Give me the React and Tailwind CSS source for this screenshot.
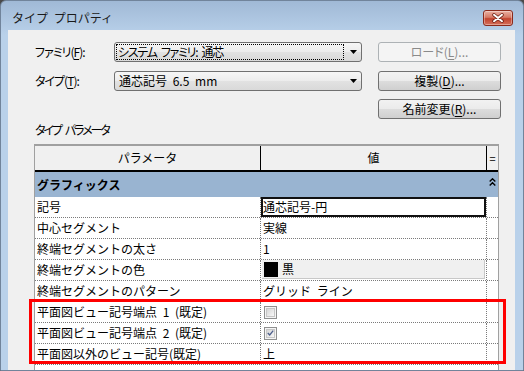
function Mn({ children }) {
  return <span className="underline underline-offset-[2px]">{children}</span>;
}

function Arrow() {
  return (
    <svg width="7" height="4" viewBox="0 0 7 4">
      <path d="M0 0h7L3.5 4z" fill="#000" />
    </svg>
  );
}

function Dropdown({ children, focus }) {
  return (
    <div className="w-[248px] h-[20px] rounded-[3px] border border-[#707070] bg-[linear-gradient(#f6f6f6,#ececec_50%,#e2e2e2_50%,#d9d9d9)] flex items-center pl-[1px]">
      <div
        className={`w-[228px] h-[16px] flex items-center pl-[1px] ${
          focus ? "border border-dotted border-black" : "border border-transparent"
        }`}
      >
        {children}
      </div>
      <div className="flex-1 flex justify-center pl-[1px]">
        <Arrow />
      </div>
    </div>
  );
}

function Button({ children, disabled, className = "" }) {
  return (
    <div
      className={`w-[123px] h-[20px] rounded-[3px] border flex items-center justify-center leading-none ${
        disabled
          ? "border-[#adb2b5] bg-[#f4f4f4] text-[#8a8a8a]"
          : "border-[#707070] bg-[linear-gradient(#f2f2f2,#ebebeb_50%,#dddddd_50%,#cfcfcf)] text-black"
      } ${className}`}
    >
      {children}
    </div>
  );
}

function CloseButton() {
  return (
    <div className="w-[30px] h-[16px] rounded-[3px] border border-[#8a2a1c] bg-[linear-gradient(#eab0a3,#d67a66_45%,#c2432f_55%,#d5705a)] shadow-[inset_0_0_0_1px_rgba(255,255,255,0.35)] flex items-center justify-center">
      <svg width="12" height="10" viewBox="0 0 12 10">
        <path d="M2 1.8L10 8.2M10 1.8L2 8.2" stroke="#6b1f14" strokeWidth="3.4" strokeLinecap="round" />
        <path d="M2 1.8L10 8.2M10 1.8L2 8.2" stroke="#fff" strokeWidth="2" strokeLinecap="round" />
      </svg>
    </div>
  );
}

function Checkbox({ checked }) {
  return (
    <div className="w-[13px] h-[13px] border border-[#8e8f8f] bg-[#f4f4f4] p-[1px]">
      <div className="w-full h-full border border-[#c6c6c6] bg-[linear-gradient(135deg,#d6d6d6,#f7f7f7)] flex items-center justify-center">
        {checked && (
          <svg width="9" height="8" viewBox="0 0 9 8">
            <path d="M1 4l2.5 2.6L8 1" stroke="#4d5f8c" strokeWidth="1.7" fill="none" />
          </svg>
        )}
      </div>
    </div>
  );
}

function Chevrons() {
  return (
    <svg width="7" height="8" viewBox="0 0 7 8">
      <path d="M0.7 3.5L3.5 0.8L6.3 3.5M0.7 7.5L3.5 4.8L6.3 7.5" stroke="#000" strokeWidth="1.4" fill="none" />
    </svg>
  );
}

const rows = [
  {
    name: "記号",
    value: (
      <div className="w-full h-full border-2 border-[#111] flex items-center">通芯記号-円</div>
    ),
    pad: "pl-0",
  },
  { name: "中心セグメント", value: "実線" },
  { name: "終端セグメントの太さ", value: "1" },
  {
    name: "終端セグメントの色",
    value: (
      <div className="w-full h-[19px] self-start mx-[1px] bg-[#f0f0f0] border-r border-b border-[#c8c8c8] flex items-center pl-[2px] gap-[4px]">
        <div className="w-[14px] h-[15px] bg-black" />
        <span>黒</span>
      </div>
    ),
    pad: "pl-0",
  },
  { name: "終端セグメントのパターン", value: "グリッド ライン" },
  { name: "平面図ビュー記号端点 1 (既定)", value: <Checkbox />, pad: "pl-[3px]" },
  { name: "平面図ビュー記号端点 2 (既定)", value: <Checkbox checked />, pad: "pl-[3px]" },
  { name: "平面図以外のビュー記号(既定)", value: "上" },
];

export default function App() {
  return (
    <div className="relative w-[524px] h-[371px] overflow-hidden bg-[#4a4a4a] font-['Noto_Sans_CJK_JP',sans-serif] text-[12px] text-black [word-spacing:3px]">
      <div className="h-full rounded-t-[6px] border border-[#71849b] bg-[linear-gradient(#a0b9d6,#b9d1ea_34px)] flex flex-col">
        <div className="h-[29px] shrink-0 pt-[5px] pl-[11px] pr-[10px] flex items-center justify-between">
          <span className="leading-none text-[#1a1a1a]">タイプ プロパティ</span>
          <CloseButton />
        </div>

        <div className="flex-1 min-h-0 ml-[7px] mr-[8px] bg-[#f0f0f0] flex flex-col pl-[26px] pt-[12px]">
          <div className="flex items-center h-[20px]">
            <div className="w-[80px] pl-[1px] leading-none tracking-[-1px] [font-feature-settings:'palt']">
              ファミリ(<Mn>F</Mn>):
            </div>
            <Dropdown focus>
              <span className="leading-none tracking-[-1.3px] [font-feature-settings:'palt']">システム ファミリ: 通芯</span>
            </Dropdown>
            <Button disabled className="ml-[16px] [font-feature-settings:'palt']">
              ロード(<Mn>L</Mn>)...
            </Button>
          </div>

          <div className="flex items-center h-[20px] mt-[9px]">
            <div className="w-[80px] pl-[1px] leading-none tracking-[-1px] [font-feature-settings:'palt']">
              タイプ(<Mn>T</Mn>):
            </div>
            <Dropdown>
              <span className="leading-none pl-[1px]">通芯記号 6.5 mm</span>
            </Dropdown>
            <Button className="ml-[16px]">
              複製(<Mn>D</Mn>)...
            </Button>
          </div>

          <div className="flex h-[20px] mt-[8px]">
            <Button className="ml-[344px]">
              名前変更(<Mn>R</Mn>)...
            </Button>
          </div>

          <div className="mt-[4px] h-[14px] leading-[14px] pl-[1px] tracking-[-2px] [font-feature-settings:'palt']">
            タイプ パラメータ
          </div>

          <div className="mt-[7px] w-[465px] flex-1 min-h-0 overflow-hidden bg-white border-t-2 border-t-[#a0a0a0] border-l border-l-[#a0a0a0] border-r border-r-[#a0a0a0] flex flex-col">
            <div className="h-[26px] shrink-0 bg-[#f0f0f0] border-b-2 border-black flex">
              <div className="w-[225px] flex items-center justify-center leading-none">パラメータ</div>
              <div className="w-[226px] border-l border-black flex items-center justify-center leading-none">値</div>
              <div className="flex-1 border-l border-black flex items-center justify-center leading-none text-[11px]">=</div>
            </div>

            <div className="h-[25px] shrink-0 bg-[#99b4d1] flex">
              <div className="w-[451px] pl-[2px] flex items-center font-bold leading-none">グラフィックス</div>
              <div className="flex-1 flex justify-center pt-[6px]">
                <Chevrons />
              </div>
            </div>

            {rows.map((r) => (
              <div key={r.name} className="h-[21px] shrink-0 flex border-b border-dotted border-[#7a7a7a]">
                <div className="w-[225px] pl-[2px] flex items-center leading-none">{r.name}</div>
                <div
                  className={`w-[226px] border-l border-dotted border-[#7a7a7a] flex items-center leading-none ${
                    r.pad || "pl-[2px]"
                  }`}
                >
                  {r.value}
                </div>
                <div className="flex-1 border-l border-dotted border-[#7a7a7a]" />
              </div>
            ))}
          </div>
        </div>
      </div>

      <div className="absolute left-[29px] top-[299px] w-[477px] h-[65px] border-[3px] border-[#ff0000]" />
    </div>
  );
}
